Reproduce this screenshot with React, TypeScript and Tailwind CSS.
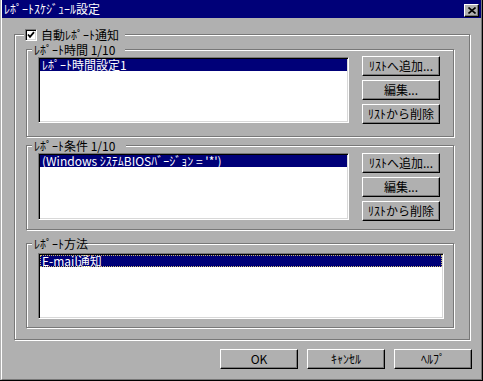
import React from 'react';

const FONT = { fontFamily: '"Noto Sans CJK JP", "Noto Sans", sans-serif' };

const GroupBox: React.FC<{
  legend: React.ReactNode;
  legendWidth: string;
  className?: string;
  children: React.ReactNode;
}> = ({ legend, legendWidth, className, children }) => (
  <div
    className={`relative border border-[#787878] shadow-[inset_1px_1px_0_#fff,1px_1px_0_#fff] ${className ?? ''}`}
  >
    <div className={`absolute top-[-6px] left-[5px] h-[12px] bg-[#b0b0b0] pl-[2px] ${legendWidth}`}>
      <span className="block text-[12px] leading-[12px] text-black whitespace-nowrap">{legend}</span>
    </div>
    {children}
  </div>
);

const Button: React.FC<{ label: string; className?: string }> = ({ label, className }) => (
  <button
    type="button"
    className={`flex items-center justify-center border border-t-white border-l-white border-r-black border-b-black bg-[#b0b0b0] shadow-[inset_-1px_-1px_0_#787878] text-[12px] leading-[12px] text-black whitespace-nowrap ${className ?? ''}`}
  >
    {label}
  </button>
);

const ListBox: React.FC<{ item: string; focused?: boolean; className?: string }> = ({
  item,
  focused,
  className,
}) => (
  <div
    className={`border border-t-[#787878] border-l-[#787878] border-r-white border-b-white bg-white shadow-[inset_1px_1px_0_#000,inset_-1px_-1px_0_#d8d8d8] p-px ${className ?? ''}`}
  >
    <div
      className={`h-[12px] bg-[#000078] pl-[2px] text-[12px] leading-[12px] text-white whitespace-nowrap ${
        focused ? 'outline outline-1 outline-dotted outline-[#c8b870] -outline-offset-1' : ''
      }`}
    >
      {item}
    </div>
  </div>
);

const ListButtons: React.FC = () => (
  <div className="flex flex-col gap-[4px]">
    <Button label="ﾘｽﾄへ追加..." className="w-[78px] h-[20px]" />
    <Button label="編集..." className="w-[78px] h-[20px]" />
    <Button label="ﾘｽﾄから削除" className="w-[78px] h-[20px]" />
  </div>
);

export default function App() {
  return (
    <div style={FONT} className="w-[483px] h-[381px] bg-[#b0b0b0] pl-px flex border-r border-b border-black">
      <div className="flex-1 flex flex-col border-l border-white border-r border-b border-r-[#787878] border-b-[#787878]">
        {/* Title bar */}
        <div className="h-[18px] bg-[#000078] flex items-center justify-between pl-[2px] pr-[2px]">
          <span className="text-[12px] leading-[12px] text-white whitespace-nowrap">ﾚﾎﾟｰﾄｽｹｼﾞｭｰﾙ設定</span>
          <div className="w-[15px] h-[13px] mt-[2px] flex items-center justify-center bg-[#b0b0b0] border border-t-white border-l-white border-r-black border-b-black shadow-[inset_-1px_-1px_0_#787878]">
            <svg width="8" height="7" viewBox="0 0 8 7">
              <path d="M0.5 0.5 L7.5 6.5 M7.5 0.5 L0.5 6.5" stroke="#000" strokeWidth="1.6" />
            </svg>
          </div>
        </div>

        {/* Outer group: auto report */}
        <div className="ml-[12px] mt-[16px] w-[456px] h-[306px] relative border border-[#787878] shadow-[inset_1px_1px_0_#fff,1px_1px_0_#fff] pl-[11px] pt-[14px]">
          <div className="absolute top-[-7px] left-[9px] w-[101px] h-[13px] bg-[#b0b0b0] pl-px flex items-center gap-[4px]">
            <div className="w-[12px] h-[12px] border border-t-[#787878] border-l-[#787878] border-r-white border-b-white bg-white shadow-[inset_1px_1px_0_#000,inset_-1px_-1px_0_#d8d8d8] flex items-center justify-center">
              <svg width="8" height="8" viewBox="0 0 8 8">
                <path d="M1 3.5 L3 5.8 L7 1.2" fill="none" stroke="#000" strokeWidth="1.8" />
              </svg>
            </div>
            <span className="text-[12px] leading-[12px] text-black whitespace-nowrap">自動ﾚﾎﾟｰﾄ通知</span>
          </div>

          {/* Report time */}
          <GroupBox legend="ﾚﾎﾟｰﾄ時間 1/10" legendWidth="w-[93px]" className="w-[428px] h-[88px] pl-[11px] pt-[7px]">
            <div className="flex items-start gap-[13px]">
              <ListBox item="ﾚﾎﾟｰﾄ時間設定1" className="w-[311px] h-[66px]" />
              <div className="-mt-px">
                <ListButtons />
              </div>
            </div>
          </GroupBox>

          {/* Report condition */}
          <GroupBox legend="ﾚﾎﾟｰﾄ条件 1/10" legendWidth="w-[94px]" className="mt-[8px] w-[428px] h-[85px] pl-[11px] pt-[7px]">
            <div className="flex items-start gap-[13px]">
              <ListBox item="(Windows ｼｽﾃﾑBIOSﾊﾞｰｼﾞｮﾝ = '*')" className="w-[311px] h-[67px]" />
              <ListButtons />
            </div>
          </GroupBox>

          {/* Report method */}
          <GroupBox legend="ﾚﾎﾟｰﾄ方法" legendWidth="w-[54px]" className="mt-[13px] w-[428px] h-[85px] pl-[11px] pt-[9px]">
            <ListBox item="E-mail通知" focused className="w-[406px] h-[66px]" />
          </GroupBox>
        </div>

        {/* Dialog buttons */}
        <div className="mt-[9px] flex justify-end gap-[9px] pr-[9px]">
          <Button label="OK" className="w-[78px] h-[20px]" />
          <Button label="ｷｬﾝｾﾙ" className="w-[78px] h-[20px]" />
          <Button label="ﾍﾙﾌﾟ" className="w-[78px] h-[20px]" />
        </div>
      </div>
    </div>
  );
}
